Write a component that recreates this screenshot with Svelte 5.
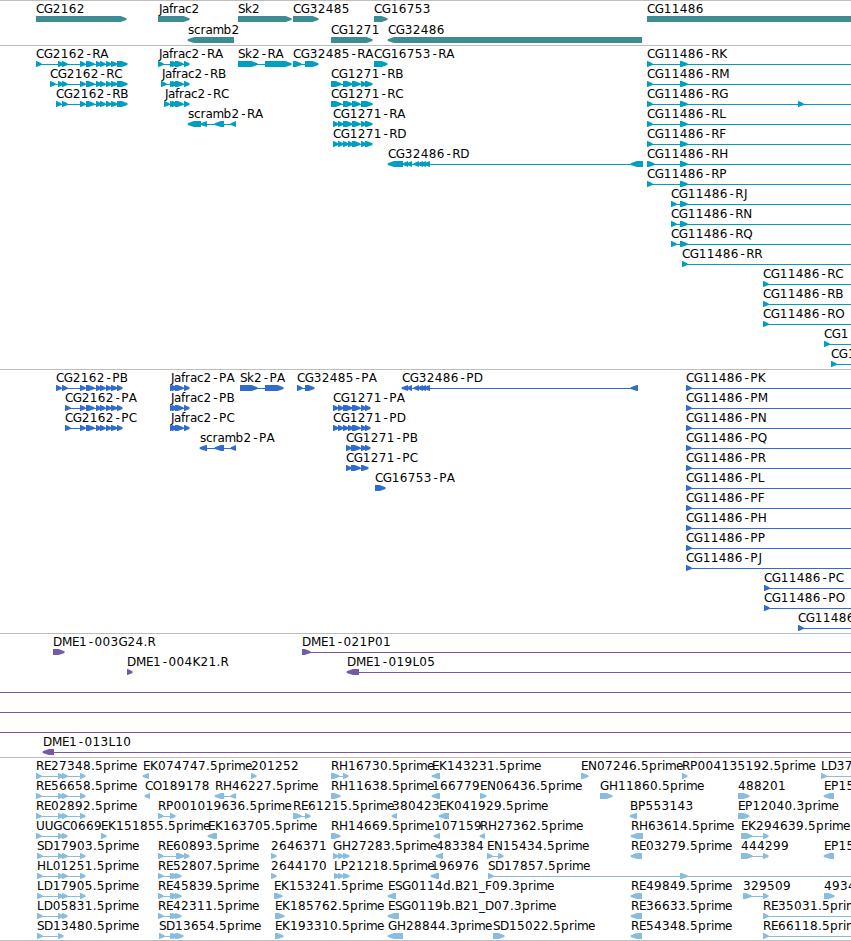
<script lang="ts">
    type Exon = [number, number];

    interface Feature {
        label: string;
        x: number;
        end: number;
        reverse: boolean;
        exons: Exon[];
    }

    interface Track {
        name: string;
        rows: Feature[][];
    }

    const WIDTH = 851;
    const HEAD = 6;

    // glyph advances that differ from the common 8px
    const advances: Record<string, number> = {
        '.': 4, '-': 7.5, C: 7.7, D: 9, E: 7, F: 7, G: 9, H: 9, J: 4, L: 6.6, M: 10, N: 9,
        O: 9, P: 7.5, S: 7, U: 8.6, a: 7, f: 4, r: 5, c: 6.5, s: 6, k: 7, m: 11, e: 7, i: 3, _: 6
    };

    // spans: "start-end start-end", a leading "<" flips the strand,
    // a trailing "+" runs the line past the right edge
    function feature(label: string, spans: string): Feature {
        const reverse = spans.startsWith('<');
        const open = spans.endsWith('+');
        const exons = spans
            .replace(/[<+]/g, '')
            .trim()
            .split(' ')
            .map(s => s.split('-').map(Number) as Exon);

        return {
            label,
            x: exons[0][0],
            end: open ? WIDTH : exons[exons.length - 1][1],
            reverse,
            exons
        };
    }

    function row(...items: string[]): Feature[] {
        return items.map(item => {
            const [label, spans] = item.split(':');
            return feature(label, spans);
        });
    }

    function glyphs(label: string, x: number): string {
        let at = x + 0.1;
        return [...label].map(char => {
            const shift = char === '-' ? 1.6 : char === 'J' ? 0.8 : 0;
            const place = at + shift;
            at += advances[char] ?? 8;
            return place.toFixed(1);
        }).join(' ');
    }

    function arrow([start, end]: Exon, reverse: boolean): string {
        const head = Math.min(HEAD, end - start);
        return reverse
            ? `M${end} 15V21H${start + head}L${start - 0.3} 18.9V17.3L${start + head} 15Z`
            : `M${start} 15V21H${end - head + 0.6}L${end + 0.5} 18.9V17.3L${end - head + 0.6} 15Z`;
    }

    const cg2162 = '80-85 86-94 96-101 100-105 106-111 111-117';
    const jafrac = '170-175 172-177 175-183 184-189';
    const cg32486 = '407-412 414-419 418-423 421-426 424-430';
    const through: Feature = { label: '', x: 0, end: WIDTH, reverse: false, exons: [] };

    const tracks: Track[] = [
        {
            name: 'gene',
            rows: [
                row('CG2162:36-126', 'Jafrac2:158-189', 'Sk2:238-291', 'CG32485:293-318',
                    'CG16753:374-387', 'CG11486:647-870'),
                row('scramb2:<188-234', 'CG1271:331-372', 'CG32486:<388-642')
            ]
        },
        {
            name: 'transcript',
            rows: [
                row(`CG2162-RA:36-41 58-63 62-67 ${cg2162} 117-127`, `Jafrac2-RA:158-163 ${jafrac}`,
                    'Sk2-RA:238-257 265-291', 'CG32485-RA:293-301 305-318', 'CG16753-RA:374-387',
                    'CG11486-RK:647-652 680-687+'),
                row(`CG2162-RC:50-55 58-63 62-67 ${cg2162} 117-127`, `Jafrac2-RB:161-166 ${jafrac}`,
                    'CG1271-RB:331-341 343-352 352-360 361-366 365-372', 'CG11486-RM:647-652 680-687+'),
                row(`CG2162-RB:56-61 62-67 ${cg2162} 117-127`, `Jafrac2-RC:164-169 ${jafrac}`,
                    'CG1271-RC:331-341 343-352 352-360 361-372', 'CG11486-RG:647-652 680-687 798-803+'),
                row('scramb2-RA:<188-201 201-207 215-224 231-236',
                    'CG1271-RA:333-338 338-343 343-352 352-360 361-366 365-372', 'CG11486-RL:647-652 680-687+'),
                row('CG1271-RD:333-338 338-343 343-348 348-353 352-360 361-366 365-372',
                    'CG11486-RF:647-652 680-687+'),
                row(`CG32486-RD:<388-403 403-408 ${cg32486} 631-643`, 'CG11486-RH:647-654 680-687+'),
                row('CG11486-RP:647-652 680-687+'),
                row('CG11486-RJ:671-676 680-687+'),
                row('CG11486-RN:671-676 680-687+'),
                row('CG11486-RQ:671-676 680-687+'),
                row('CG11486-RR:682-687+'),
                row('CG11486-RC:763-768+'),
                row('CG11486-RB:763-768+'),
                row('CG11486-RO:763-768+'),
                row('CG1:824-829+'),
                row('CG1:831-836+')
            ]
        },
        {
            name: 'protein',
            rows: [
                row(`CG2162-PB:56-61 62-67 ${cg2162} 117-122`, `Jafrac2-PA:${jafrac}`,
                    'Sk2-PA:240-257 265-283', 'CG32485-PA:297-302 305-314',
                    `CG32486-PD:<402-408 ${cg32486} 631-638`, 'CG11486-PK:686-691+'),
                row(`CG2162-PA:65-70 ${cg2162} 117-122`, `Jafrac2-PB:${jafrac}`,
                    'CG1271-PA:333-338 338-343 343-352 352-360 361-366 365-370', 'CG11486-PM:686-691+'),
                row(`CG2162-PC:65-70 ${cg2162} 117-122`, `Jafrac2-PC:${jafrac}`,
                    'CG1271-PD:333-338 338-343 343-348 348-353 352-360 361-366 365-370', 'CG11486-PN:686-691+'),
                row('scramb2-PA:<200-207 215-224 231-236', 'CG1271-PB:346-351 351-360 361-366 365-370',
                    'CG11486-PQ:686-691+'),
                row('CG1271-PC:346-351 351-360 361-368', 'CG11486-PR:686-691+'),
                row('CG16753-PA:375-385', 'CG11486-PL:686-691+'),
                row('CG11486-PF:686-691+'),
                row('CG11486-PH:686-691+'),
                row('CG11486-PP:686-691+'),
                row('CG11486-PJ:686-691+'),
                row('CG11486-PC:764-769+'),
                row('CG11486-PO:764-769+'),
                row('CG11486:798-803+')
            ]
        },
        {
            name: 'clone',
            rows: [
                row('DME1-003G24.R:53-64', 'DME1-021P01:302-310+'),
                row('DME1-004K21.R:127-132', 'DME1-019L05:<347-359+'),
                [through],
                [through],
                [through],
                row('DME1-013L10:<43-54+')
            ]
        },
        {
            name: 'est',
            rows: [
                row('RE27348.5prime:36-41 58-63 62-67 80-85', 'EK074747.5prime:<143-149', '201252:251-256',
                    'RH16730.5prime:331-339 343-348', 'EK143231.5prime:<432-440', 'EN07246.5prime:581-588',
                    'RP004135192.5prime:682-687', 'LD37:821-826+'),
                row('RE56658.5prime:36-41 58-63 62-67 80-85', 'CO189178:<145-150', 'RH46227.5prime:<215-224 231-236',
                    'RH11638.5prime:331-340', '166779:<432-440', 'EN06436.5prime:480-486',
                    'GH11860.5prime:600-612', '488201:738-749', 'EP15:<824-834'),
                row('RE02892.5prime:36-41 58-63 62-67 80-85', 'RP001019636.5prime:158-163 170-175',
                    'RE61215.5prime:293-301 305-310', '380423:<392-397', 'EK041929.5prime:<439-449',
                    'BP553143:<630-637', 'EP12040.3prime:738-749'),
                row('UUGC0669:36-41 58-63 62-67', 'EK151855.5prime:101-106', 'EK163705.5prime:<208-217',
                    'RH14669.5prime:331-340', '107159:<434-440', 'RH27362.5prime:<480-485',
                    'RH63614.5prime:<631-643', 'EK294639.5prime:741-752 763-768'),
                row('SD17903.5prime:37-42 58-63 62-67 80-85', 'RE60893.5prime:158-163 176-184 184-189',
                    '2646371:271-276', 'GH27283.5prime:333-338 338-343 343-349', '483384:<436-443',
                    'EN15434.5prime:487-492 498-503', 'RE03279.5prime:<631-642', '444299:741-752 763-768',
                    'EP15:<824-834'),
                row('HL01251.5prime:37-42 58-63 62-67 80-85', 'RE52807.5prime:158-163 170-175 172-177 175-181',
                    '2644170:271-276', 'LP21218.5prime:334-339 338-343 343-349', '196976:<431-439',
                    'SD17857.5prime:488-493 680-687+'),
                row('LD17905.5prime:37-42 58-63 62-67 80-85', 'RE45839.5prime:158-163 170-175 172-177 175-181',
                    'EK153241.5prime:274-282', 'ESG0114d.B21_F09.3prime:<388-396', 'RE49849.5prime:<631-642',
                    '329509:743-751 763-768', '4934:824-834'),
                row('LD05831.5prime:37-42 58-63 62-67', 'RE42311.5prime:158-163 170-175 172-177 175-181',
                    'EK185762.5prime:275-284', 'ESG0119b.B21_D07.3prime:<388-399', 'RE36633.5prime:<631-642',
                    'RE35031.5prime:763-768+'),
                row('SD13480.5prime:37-42 58-63', 'SD13654.5prime:159-164 170-175 172-177 175-183',
                    'EK193310.5prime:275-283', 'GH28844.3prime:<388-403', 'SD15022.5prime:493-504',
                    'RE54348.5prime:<631-642', 'RE66118.5prime:763-768+')
            ]
        }
    ];
</script>

<main>
    {#each tracks as track}
        <section class={track.name}>
            {#each track.rows as features}
                <svg class="row" viewBox="0 0 851 20" width="851" height="20">
                    {#each features as item}
                        <rect x={item.x} y="18" width={item.end - item.x} height="1" />
                        {#each item.exons as exon}
                            <path d={arrow(exon, item.reverse)} />
                        {/each}
                    {/each}
                    {#each features as item}
                        {#if item.label}
                            <text x={glyphs(item.label, item.x)} y="12">{item.label}</text>
                        {/if}
                    {/each}
                </svg>
            {/each}
        </section>
    {/each}
</main>

<style>
    :global(body) {
        background: white;
    }

    main {
        width: 851px;
        height: 941px;
        overflow: hidden;
        background: white;
        border-bottom: 1px solid #bebebe;
        box-sizing: border-box;
    }

    section {
        display: flex;
        flex-direction: column;
        padding-bottom: 3px;
        border-top: 1px solid #bebebe;
    }

    .row {
        display: block;
        flex: none;
        height: 20px;
        overflow: visible;
    }

    text {
        font-family: "DejaVu Sans", sans-serif;
        font-size: 12px;
        fill: black;
    }

    .gene {
        gap: 1px;
        fill: #3d8c93;
    }

    .transcript {
        fill: #009fc1;
    }

    .protein {
        fill: #306ccd;
    }

    .clone {
        fill: #7559a8;
    }

    .est {
        padding-bottom: 2px;
        fill: #88bde0;
    }
</style>
